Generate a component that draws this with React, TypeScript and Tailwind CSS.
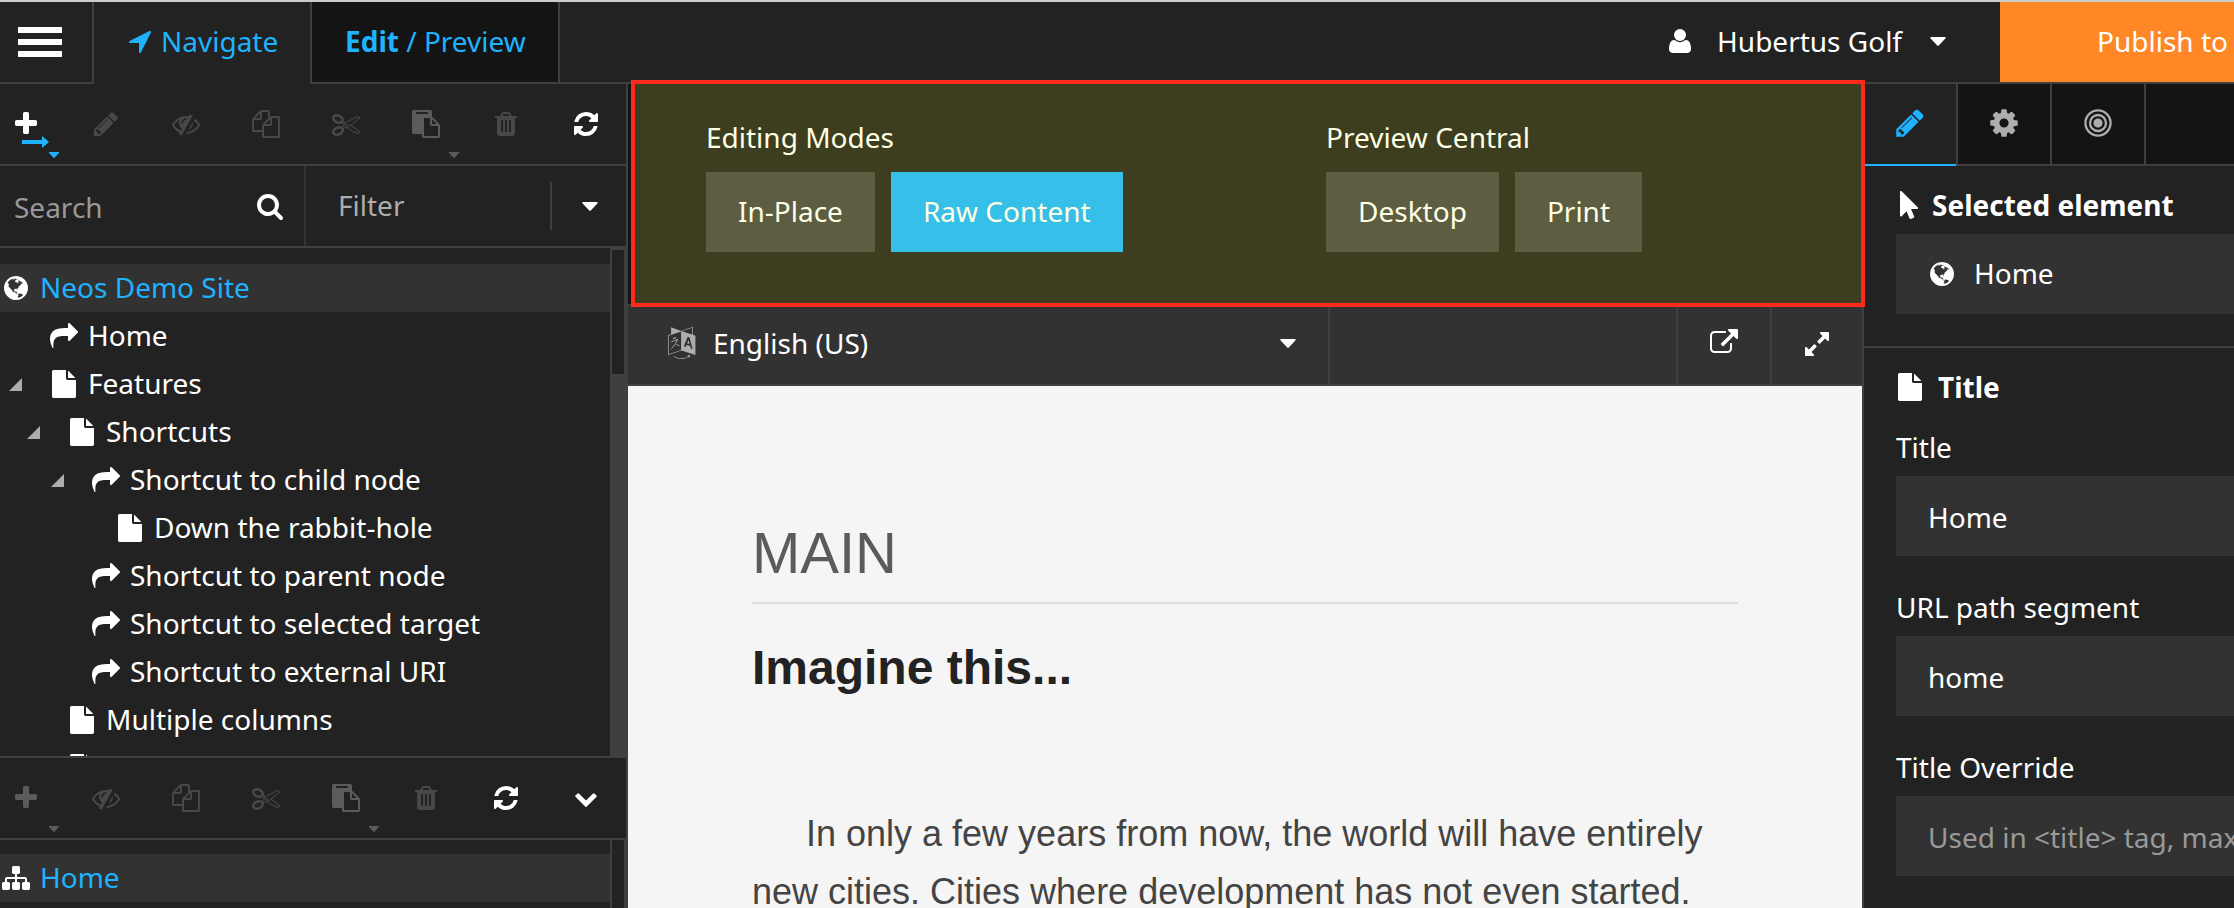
import type { ReactNode } from "react";

const paths = {
  plus: "M1600 736v192q0 40-28 68t-68 28h-416v416q0 40-28 68t-68 28h-192q-40 0-68-28t-28-68v-416h-416q-40 0-68-28t-28-68v-192q0-40 28-68t68-28h416v-416q0-40 28-68t68-28h192q40 0 68 28t28 68v416h416q40 0 68 28t28 68z",
  pencil: "M491 1536l91-91-235-235-91 91v107h128v128h107zm523-928q0-22-22-22-10 0-17 7l-542 542q-7 7-7 17 0 22 22 22 10 0 17-7l542-542q7-7 7-17zm-54-192l416 416-832 832h-416v-416zm683 96q0 53-37 90l-166 166-416-416 166-165q36-38 90-38 53 0 91 38l235 234q37 39 37 91z",
  refresh: "M1639 1056q0 5-1 7-64 268-268 434.5t-478 166.5q-146 0-282.5-55t-243.5-157l-129 129q-19 19-45 19t-45-19-19-45v-448q0-26 19-45t45-19h448q26 0 45 19t19 45-19 45l-137 137q71 66 161 102t187 36q134 0 250-65t186-179q11-17 53-117 8-23 30-23h192q13 0 22.5 9.5t9.5 22.5zm25-800v448q0 26-19 45t-45 19h-448q-26 0-45-19t-19-45 19-45l138-138q-148-137-349-137-134 0-250 65t-186 179q-11 17-53 117-8 23-30 23h-199q-13 0-22.5-9.5t-9.5-22.5v-7q65-268 270-434.5t480-166.5q146 0 284 55.5t245 156.5l130-129q19-19 45-19t45 19 19 45z",
  search: "M1216 832q0-185-131.5-316.5t-316.5-131.5-316.5 131.5-131.5 316.5 131.5 316.5 316.5 131.5 316.5-131.5 131.5-316.5zm512 832q0 52-38 90t-90 38q-54 0-90-38l-343-342q-179 124-399 124-143 0-273.5-55.5t-225-150-150-225-55.5-273.5 55.5-273.5 150-225 225-150 273.5-55.5 273.5 55.5 225 150 150 225 55.5 273.5q0 220-124 399l343 343q37 37 37 90z",
  eyeSlash: "M555 1335l78-141q-87-63-136-159t-49-203q0-121 61-225-229 117-381 353 167 258 427 375zm389-759q0-20-14-34t-34-14q-125 0-214.5 89.5t-89.5 214.5q0 20 14 34t34 14 34-14 14-34q0-86 61-147t147-61q20 0 34-14t14-34zm363-191q0 7-1 9-106 189-316 567t-315 566l-49 89q-10 16-28 16-12 0-134-70-16-10-16-28 0-12 44-87-143-65-263.5-173t-208.5-245q-20-31-20-69t20-69q153-235 380-371t496-136q89 0 180 17l54-97q10-16 28-16 5 0 18 6t31 15.5 33 18.5 31.5 18.5 19.5 11.5q16 10 16 27zm37 447q0 139-79 253.5t-209 164.5l280-502q8 45 8 84zm448 128q0 35-20 69-39 64-109 145-150 172-347.5 267t-419.5 95l74-132q212-18 392.5-137t301.5-307q-115-179-282-294l63-112q95 64 182.5 153t144.5 184q20 34 20 69z",
  copy: "M1696 384q40 0 68 28t28 68v1216q0 40-28 68t-68 28h-960q-40 0-68-28t-28-68v-288h-544q-40 0-68-28t-28-68v-672q0-40 20-88t48-76l408-408q28-28 76-48t88-20h416q40 0 68 28t28 68v328q68-40 128-40h416zm-544 213l-299 299h299v-299zm-640-384l-299 299h299v-299zm196 647l316-316v-416h-384v416q0 40-28 68t-68 28h-416v640h512v-256q0-40 20-88t48-76zm956 804v-1152h-384v416q0 40-28 68t-68 28h-416v640h896z",
  cut: "M960 896q26 0 45 19t19 45-19 45-45 19-45-19-19-45 19-45 45-19zm300 64l507 398q28 20 25 56-5 35-35 51l-128 64q-13 7-29 7-17 0-31-8l-690-387-110 66q-8 4-12 5 14 49 10 97-7 77-56 147.5t-132 123.5q-132 84-277 84-136 0-222-78-90-84-79-207 7-76 56-147t131-124q132-84 278-84 83 0 151 31 9-13 22-22l122-73-122-73q-13-9-22-22-68 31-151 31-146 0-278-84-82-53-131-124t-56-147q-5-59 15.5-113t63.5-93q85-79 222-79 145 0 277 84 83 52 132 123t56 148q4 48-10 97 4 1 12 5l110 66 690-387q14-8 31-8 16 0 29 7l128 64q30 16 35 51 3 36-25 56zm-681-260q46-42 21-108t-106-117q-92-59-192-59-74 0-113 36-46 42-21 108t106 117q92 59 192 59 74 0 113-36zm-85 745q81-51 106-117t-21-108q-39-36-113-36-100 0-192 59-81 51-106 117t21 108q39 36 113 36 100 0 192-59zm178-613l96 58v-11q0-36 33-56l14-8-79-44-26 26q-3 3-10 11t-12 12q-2 2-4 3.5t-3 2.5zm224 224l96 32 736-576-128-64-768 431v113l-160 96 9 8q2 2 7 6 4 4 11 12t11 12l26 26zm704 416l128-64-520-408-177 138q-2 3-13 7z",
  paste: "M768 1664h896v-640h-416q-40 0-68-28t-28-68v-416h-384v1152zm256-1440v-64q0-13-9.5-22.5t-22.5-9.5h-704q-13 0-22.5 9.5t-9.5 22.5v64q0 13 9.5 22.5t22.5 9.5h704q13 0 22.5-9.5t9.5-22.5zm256 672h299l-299-299v299zm512 128v672q0 40-28 68t-68 28h-960q-40 0-68-28t-28-68v-160h-544q-40 0-68-28t-28-68v-1344q0-40 28-68t68-28h1088q40 0 68 28t28 68v328q21 13 36 28l408 408q28 28 48 76t20 88z",
  trash: "M704 1376v-704q0-14-9-23t-23-9h-64q-14 0-23 9t-9 23v704q0 14 9 23t23 9h64q14 0 23-9t9-23zm256 0v-704q0-14-9-23t-23-9h-64q-14 0-23 9t-9 23v704q0 14 9 23t23 9h64q14 0 23-9t9-23zm256 0v-704q0-14-9-23t-23-9h-64q-14 0-23 9t-9 23v704q0 14 9 23t23 9h64q14 0 23-9t9-23zm-544-992h448l-48-117q-7-9-17-11h-317q-10 2-17 11zm928 32v64q0 14-9 23t-23 9h-96v948q0 83-47 143.5t-113 60.5h-832q-66 0-113-58.5t-47-141.5v-952h-96q-14 0-23-9t-9-23v-64q0-14 9-23t23-9h309l70-167q15-37 54-63t79-26h320q40 0 79 26t54 63l70 167h309q14 0 23 9t9 23z",
  globe: "M896 128q209 0 385.5 103t279.5 279.5 103 385.5-103 385.5-279.5 279.5-385.5 103-385.5-103-279.5-279.5-103-385.5 103-385.5 279.5-279.5 385.5-103zm274 521q-2 1-9.5 9.5t-13.5 9.5q2 0 4.5-5t5-11 3.5-7q6-7 22-15 14-6 52-12 34-8 51 11-2-2 9.5-13t14.5-12q3-2 15-4.5t15-7.5l2-22q-12 1-17.5-7t-6.5-21q0 2-6 8 0-7-4.5-8t-11.5 1-9 1q-10-3-15-7.5t-8-16.5-4-15q-2-5-9.5-11t-9.5-10q-1-2-2.5-5.5t-3-6.5-4-5.5-5.5-2.5-7 5-7.5 10-4.5 5q-3-2-6-1.5t-4.5 1-4.5 3-5 3.5q-3 2-8.5 3t-8.5 2q15-5-1-11-10-4-16-3 9-4 7.5-12t-8.5-14h5q-1-4-8.5-8.5t-17.5-8.5-13-6q-8-5-34-9.5t-33-.5q-5 6-4.5 10.5t4 14 3.5 12.5q1 6-5.5 13t-6.5 12q0 7 14 15.5t10 21.5q-3 8-16 16t-16 12q-5 8-1.5 18.5t10.5 16.5q2 2 1.5 4t-3.5 4.5-5.5 4-6.5 3.5l-3 2q-11 5-20.5-6t-13.5-26q-7-25-16-30-23-8-29 1-5-13-41-26-25-9-58-4 6-1 0-15-7-15-19-12 3-6 4-17.5t1-13.5q3-13 12-23 1-1 7-8.5t9.5-13.5.5-6q35 4 50-11 5-5 11.5-17t10.5-17q9-6 14-5.5t14.5 5.5 14.5 5q14 1 15.5-11t-7.5-20q12 1 3-17-4-7-8-9-12-4-27 5-8 4 2 8-1-1-9.5 10.5t-16.5 17.5-16-5q-1-1-5.5-13.5t-9.5-13.5q-8 0-16 15 3-8-11-15t-24-8q19-12-8-27-7-4-20.5-5t-19.5 4q-5 7-5.5 11.5t5 8 10.5 5.5 11.5 4 8.5 3q14 10 8 14-2 1-8.5 3.5t-11.5 4.5-6 4q-3 4 0 14t-2 14q-5-5-9-17.5t-7-16.5q7 9-25 6l-10-1q-4 0-16 2t-20.5 1-13.5-8q-4-8 0-20 1-4 4-2-4-3-11-9.5t-10-8.5q-46 15-94 41 6 1 12-1 5-2 13-6.5t10-5.5q34-14 42-7l5-5q14 16 20 25-7-4-30-1-20 6-22 12 7 12 5 18-4-3-11.5-10t-14.5-11-15-5q-16 0-22 1-146 80-235 222 7 7 12 8 4 1 5 9t2.5 11 11.5-3q9 8 3 19 1-1 44 27 19 17 21 21 3 11-10 18-1-2-9-9t-9-4q-3 5 .5 18.5t10.5 12.5q-7 0-9.5 16t-2.5 35.5-1 23.5l2 1q-3 12 5.5 34.5t21.5 19.5q-13 3 20 43 6 8 8 9 3 2 12 7.5t15 10 10 10.5q4 5 10 22.5t14 23.5q-2 6 9.5 20t10.5 23q-1 0-2.5 1t-2.5 1q3 7 15.5 14t15.5 13q1 3 2 10t3 11 8 2q2-20-24-62-15-25-17-29-3-5-5.5-15.5t-4.5-14.5q2 0 6 1.5t8.5 3.5 7.5 4 2 3q-3 7 2 17.5t12 18.5 17 19 12 13q6 6 14 19.5t0 13.5q9 0 20 10.5t17 19.5q5 8 8 26t5 24q2 7 8.5 13.5t12.5 9.5l16 8 13 7q5 2 18.5 10.5t21.5 11.5q10 4 16 4t14.5-2.5 13.5-3.5q15-2 29 15t21 21q36 19 55 11-2 1 .5 7.5t8 15.5 9 14.5 5.5 8.5q5 6 18 15t18 15q6-4 7-9-3 8 7 20t18 10q14-3 14-32-31 15-49-18 0-1-2.5-5.5t-4-8.5-2.5-8.5 0-7.5 5-3q9 0 10-3.5t-2-12.5-4-13q-1-8-11-20t-12-15q-5 9-16 8t-16-9q0 1-1.5 5.5t-1.5 6.5q-13 0-15-1 1-3 2.5-17.5t3.5-22.5q1-4 5.5-12t7.5-14.5 4-12.5-4.5-9.5-17.5-2.5q-19 1-26 20-1 3-3 10.5t-5 11.5-9 7q-7 3-24 2t-24-5q-13-8-22.5-29t-9.5-37q0-10 2.5-26.5t3-25-5.5-24.5q3-2 9-9.5t10-10.5q2-1 4.5-1.5t4.5 0 4-1.5 3-6q-1-1-4-3-3-3-4-3 7 3 28.5-1.5t27.5 1.5q15 11 22-2 0-1-2.5-9.5t-.5-13.5q5 27 29 9 3 3 15.5 5t17.5 5q3 2 7 5.5t5.5 4.5 5-.5 8.5-6.5q10 14 12 24 11 40 19 44 7 3 11 2t4.5-9.5 0-14-1.5-12.5l-1-8v-18l-1-8q-15-3-18.5-12t1.5-18.5 15-18.5q1-1 8-3.5t15.5-6.5 12.5-8q21-19 15-35 7 0 11-9-1 0-5-3t-7.5-5-4.5-2q9-5 2-16 5-3 7.5-11t7.5-10q9 12 21 2 8-8 1-16 5-7 20.5-10.5t18.5-9.5q7 2 8-2t1-12 3-12q4-5 15-9t13-5l17-11q3-4 0-4 18 2 31-11 10-11-6-20 3-6-3-9.5t-15-5.5q3-1 11.5-.5t10.5-1.5q15-10-7-16-17-5-43 12zm-163 877q206-36 351-189-3-3-12.5-4.5t-12.5-3.5q-18-7-24-8 1-7-2.5-13t-8-9-12.5-8-11-7q-2-2-7-6t-7-5.5-7.5-4.5-8.5-2-10 1l-3 1q-3 1-5.5 2.5t-5.5 3-4 3 0 2.5q-21-17-36-22-5-1-11-5.5t-10.5-7-10-1.5-11.5 7q-5 5-6 15t-2 13q-7-5 0-17.5t2-18.5q-3-6-10.5-4.5t-12 4.5-11.5 8.5-9 6.5-8.5 5.5-8.5 7.5q-3 4-6 12t-5 11q-2-4-11.5-6.5t-9.5-5.5q2 10 4 35t5 38q7 31-12 48-27 25-29 40-4 22 12 26 0 7-8 20.5t-7 21.5q0 6 2 16z",
  share: "M1792 640q0 26-19 45l-512 512q-19 19-45 19t-45-19-19-45v-256h-224q-98 0-175.5 6t-154 21.5-133 42.5-105.5 69.5-80 101-48.5 138.5-17.5 181q0 55 5 123 0 6 2.5 23.5t2.5 26.5q0 15-8.5 25t-23.5 10q-16 0-28-17-7-9-13-22t-13.5-30-10.5-24q-127-285-127-451 0-199 53-333 162-403 875-403h224v-256q0-26 19-45t45-19 45 19l512 512q19 19 19 45z",
  file: "M1152 512v-472q22 14 36 28l408 408q14 14 28 36h-472zm-128 32q0 40 28 68t68 28h544v1056q0 40-28 68t-68 28h-1344q-40 0-68-28t-28-68v-1600q0-40 28-68t68-28h800v544z",
  sitemap: "M1792 1248v320q0 40-28 68t-68 28h-320q-40 0-68-28t-28-68v-320q0-40 28-68t68-28h96v-192h-512v192h96q40 0 68 28t28 68v320q0 40-28 68t-68 28h-320q-40 0-68-28t-28-68v-320q0-40 28-68t68-28h96v-192h-512v192h96q40 0 68 28t28 68v320q0 40-28 68t-68 28h-320q-40 0-68-28t-28-68v-320q0-40 28-68t68-28h96v-192q0-52 38-90t90-38h512v-192h-96q-40 0-68-28t-28-68v-320q0-40 28-68t68-28h320q40 0 68 28t28 68v320q0 40-28 68t-68 28h-96v192h512q52 0 90 38t38 90v192h96q40 0 68 28t28 68z",
  user: "M1600 1405q0 120-73 189.5t-194 69.5h-874q-121 0-194-69.5t-73-189.5q0-53 3.5-103.5t14-109 26.5-108.5 43-97.5 62-81 85.5-53.5 111.5-20q9 0 42 21.5t74.5 48 108 48 133.5 21.5 133.5-21.5 108-48 74.5-48 42-21.5q61 0 111.5 20t85.5 53.5 62 81 43 97.5 26.5 108.5 14 109 3.5 103.5zm-320-893q0 159-112.5 271.5t-271.5 112.5-271.5-112.5-112.5-271.5 112.5-271.5 271.5-112.5 271.5 112.5 112.5 271.5z",
  locationArrow: "M1593 349l-640 1280q-17 35-57 35-5 0-15-2-22-5-35.5-22.5t-13.5-39.5v-576h-576q-22 0-39.5-13.5t-22.5-35.5 4-42 29-30l1280-640q13-7 29-7 27 0 45 19 15 14 18.5 34.5t-6.5 39.5z",
  externalLink: "M1408 928v320q0 119-84.5 203.5t-203.5 84.5h-832q-119 0-203.5-84.5t-84.5-203.5v-832q0-119 84.5-203.5t203.5-84.5h704q14 0 23 9t9 23v64q0 14-9 23t-23 9h-704q-66 0-113 47t-47 113v832q0 66 47 113t113 47h832q66 0 113-47t47-113v-320q0-14 9-23t23-9h64q14 0 23 9t9 23zm384-864v512q0 26-19 45t-45 19-45-19l-176-176-652 652q-10 10-23 10t-23-10l-114-114q-10-10-10-23t10-23l652-652-176-176q-19-19-19-45t19-45 45-19h512q26 0 45 19t19 45z",
  expand: "M883 1056q0 13-10 23l-332 332 144 144q19 19 19 45t-19 45-45 19h-448q-26 0-45-19t-19-45v-448q0-26 19-45t45-19 45 19l144 144 332-332q10-10 23-10t23 10l114 114q10 10 10 23zm781-864v448q0 26-19 45t-45 19-45-19l-144-144-332 332q-10 10-23 10t-23-10l-114-114q-10-10-10-23t10-23l332-332-144-144q-19-19-19-45t19-45 45-19h448q26 0 45 19t19 45z",
  cog: "M1152 896q0-106-75-181t-181-75-181 75-75 181 75 181 181 75 181-75 75-181zm512-109v222q0 12-8 23t-20 13l-185 28q-19 54-39 91 35 50 107 138 10 12 10 25t-9 23q-27 37-99 108t-94 71q-12 0-26-9l-138-108q-44 23-91 38-16 136-29 186-7 28-36 28h-222q-14 0-24.5-8.5t-11.5-21.5l-28-184q-49-16-90-37l-141 107q-10 9-25 9-14 0-25-11-126-114-165-168-7-10-7-23 0-12 8-23 15-21 51-66.5t54-70.5q-27-50-41-99l-183-27q-13-2-21-12.5t-8-23.5v-222q0-12 8-23t19-13l186-28q14-46 39-92-40-57-107-138-10-12-10-24 0-10 9-23 26-36 98.5-107.5t94.5-71.5q13 0 26 10l138 107q44-23 91-38 16-136 29-186 7-28 36-28h222q14 0 24.5 8.5t11.5 21.5l28 184q49 16 90 37l142-107q9-9 24-9 13 0 25 10 129 119 165 170 7 8 7 22 0 12-8 23-15 21-51 66.5t-54 70.5q26 50 41 98l183 28q13 2 21 12.5t8 23.5z",
  pointer: "M1389 1043q31 30 14 69-17 40-59 40h-382l201 476q10 25 0 49t-34 35l-177 75q-25 10-49 0t-35-34l-191-452-312 312q-19 19-45 19-12 0-24-5-40-17-40-59v-1504q0-42 40-59 12-5 24-5 27 0 45 19z",
  language: "M654 1078q-1 3-12.5-.5t-31.5-11.5l-20-9q-44-20-87-49-7-5-41-31.5t-38-28.5q-67 103-134 181-81 95-105 110-4 2-19.5 4t-18.5 0q6-4 82-92 21-24 85.5-115t78.5-118q17-30 51-98.5t36-77.5q-8-1-110 33-8 2-27.5 7.5t-34.5 9.5-17 5q-2 2-2 10.5t-1 9.5q-5 10-31 15-23 7-47 0-18-4-28-21-4-6-5-23 6-2 24.5-5t29.5-6q58-16 105-32 100-35 102-35 10-2 43-19.5t44-21.5q9-3 21.5-8t14.5-5.5 6 .5q2 12-1 33 0 2-12.5 27t-26.5 53.5-17 33.5q-25 50-77 131l64 28q12 6 74.5 32t67.5 28q4 1 10.5 25.5t4.5 30.5zm-205-486q3 15-4 28-12 23-50 38-30 12-60 12-26-3-49-26-14-15-18-41l1-3q3 3 19.5 5t26.5 0 58-16q36-12 55-14 17 0 21 17zm698 129l63 227-139-42zm-1108 800l694-232v-1032l-694 233v1031zm1241-317l102 31-181-657-100-31-216 536 102 31 45-110 211 65zm-503-962l573 184v-380zm311 1323l158 13-54 160-40-66q-130 83-276 108-58 12-91 12h-84q-79 0-199.5-39t-183.5-85q-8-7-8-16 0-8 5-13.5t13-5.5q4 0 18 7.5t30.5 16.5 20.5 11q73 37 159.5 61.5t157.5 24.5q95 0 167-14.5t157-50.5q15-7 30.5-15.5t34-19 28.5-16.5zm448-1079v1079l-774-246q-14 6-375 127.5t-368 121.5q-13 0-18-13 0-1-1-3v-1078q3-9 4-10 5-6 20-11 107-36 149-50v-384l558 198q2 0 160.5-55t316-108.5 161.5-53.5q20 0 20 21v418z",
  bullseye: "M896 640a256 256 0 1 0 0 512 256 256 0 0 0 0-512zM896 384a512 512 0 1 0 0 1024 512 512 0 0 0 0-1024zm0 128a384 384 0 1 1 0 768 384 384 0 0 1 0-768zM896 128a768 768 0 1 0 0 1536 768 768 0 0 0 0-1536zm0 128a640 640 0 1 1 0 1280 640 640 0 0 1 0-1280z",
  chevronDown: "M1683 808l-742 741q-19 19-45 19t-45-19l-742-741q-19-19-19-45.5t19-45.5l166-165q19-19 45-19t45 19l531 531 531-531q19-19 45-19t45 19l166 165q19 19 19 45.5t-19 45.5z",
};

type IconName = keyof typeof paths;

function Icon({ name, className = "size-7" }: { name: IconName; className?: string }) {
  return (
    <svg viewBox="0 0 1792 1792" className={`shrink-0 overflow-visible ${className}`} fill="currentColor" aria-hidden="true">
      <path d={paths[name]} />
    </svg>
  );
}

function Caret({ className }: { className: string }) {
  return (
    <svg viewBox="0 0 16 9" className={`shrink-0 ${className}`} fill="currentColor" aria-hidden="true">
      <path d="M1 0h14q1.400.6.4 1.600L8.700 8.600q-.7.6-1.400 0L.6 1.600Q-.4.600 1 0z" />
    </svg>
  );
}

function ToolButton({
  label,
  icon,
  tone = "text-[#484848]",
  caret,
  iconClass,
  children,
}: {
  label: string;
  icon: IconName;
  tone?: string;
  caret?: string;
  iconClass?: string;
  children?: ReactNode;
}) {
  return (
    <button type="button" aria-label={label} className={`relative flex h-20 w-20 shrink-0 items-center justify-center ${tone}`}>
      <Icon name={icon} className={iconClass} />
      {children}
      {caret && <Caret className={`absolute right-1.5 bottom-1.5 h-1.5 w-3 ${caret}`} />}
    </button>
  );
}

type Node = { label: string; icon: IconName; indent: string; open?: boolean; active?: boolean };

const documents: Node[] = [
  { label: "Neos Demo Site", icon: "globe", indent: "pl-0.5", active: true },
  { label: "Home", icon: "share", indent: "pl-[50px]" },
  { label: "Features", icon: "file", indent: "pl-[9px]", open: true },
  { label: "Shortcuts", icon: "file", indent: "pl-[27px]", open: true },
  { label: "Shortcut to child node", icon: "share", indent: "pl-[51px]", open: true },
  { label: "Down the rabbit-hole", icon: "file", indent: "pl-[116px]" },
  { label: "Shortcut to parent node", icon: "share", indent: "pl-[92px]" },
  { label: "Shortcut to selected target", icon: "share", indent: "pl-[92px]" },
  { label: "Shortcut to external URI", icon: "share", indent: "pl-[92px]" },
  { label: "Multiple columns", icon: "file", indent: "pl-[68px]" },
  { label: "Navigation elements", icon: "file", indent: "pl-[68px]" },
];

const content: Node[] = [{ label: "Home", icon: "sitemap", indent: "pl-0.5", active: true }];

function Tree({ nodes }: { nodes: Node[] }) {
  return (
    <ul>
      {nodes.map((node) => (
        <li key={node.label} className={`flex h-12 items-center ${node.indent} ${node.active ? "bg-[#323232]" : ""}`}>
          {node.open && (
            <svg viewBox="0 0 13 13" className="mr-7 size-[13px] shrink-0" fill="#adadad" aria-hidden="true">
              <path d="M13 0v13H0z" />
            </svg>
          )}
          <Icon name={node.icon} />
          <a href="#" className={`ml-2.5 pb-0.5 leading-10 whitespace-nowrap ${node.active ? "text-[#1fb3ff]" : ""}`}>
            {node.label}
          </a>
        </li>
      ))}
    </ul>
  );
}

function Field({ id, label, value, placeholder }: { id: string; label: string; value?: string; placeholder?: string }) {
  return (
    <div className="pb-8">
      <label htmlFor={id} className="block pb-2.5 leading-[38px]">
        {label}
      </label>
      <input
        id={id}
        type="text"
        defaultValue={value}
        placeholder={placeholder}
        className="block h-20 w-full bg-[#323232] pt-0.5 pl-8 text-white outline-none placeholder:text-[#999999]"
      />
    </div>
  );
}

function ModeGroup({ title, modes, active }: { title: string; modes: string[]; active?: string }) {
  return (
    <div>
      <h2 className="pb-3.5 leading-[42px]">{title}</h2>
      <div className="flex gap-4">
        {modes.map((mode) => (
          <button key={mode} type="button" className={`h-20 px-8 pb-0.5 leading-10 ${mode === active ? "bg-[#35bfe9]" : "bg-[#5d5d42]"}`}>
            {mode}
          </button>
        ))}
      </div>
    </div>
  );
}

export default function App() {
  return (
    <div className="flex h-screen flex-col overflow-hidden border-t-2 border-[#c9cdcd] bg-[#222222] font-['Noto_Sans',sans-serif] text-[28px] text-white">
      <header className="flex h-[82px] shrink-0">
        <div className="flex w-[94px] items-center border-r-2 border-b-2 border-[#3f3f3f] pl-[18px]">
          <button type="button" aria-label="Menu" className="flex w-11 flex-col gap-1.5">
            <span className="h-1.5 bg-white" />
            <span className="h-1.5 bg-white" />
            <span className="h-1.5 bg-white" />
          </button>
        </div>
        <a href="#" className="flex w-[216px] items-center gap-[7px] pb-1 pl-8 text-[#1fb3ff]">
          <Icon name="locationArrow" />
          Navigate
        </a>
        <a href="#" className="flex w-[250px] items-center border-x-2 border-b-2 border-[#3f3f3f] bg-[#141414] pb-0.5 pl-[33px] whitespace-pre text-[#1fb3ff]">
          <b>Edit</b> / Preview
        </a>
        <div className="flex flex-1 border-b-2 border-[#3f3f3f]">
          <button type="button" className="ml-auto flex items-center pr-[54px] pb-0.5">
            <Icon name="user" />
            <span className="ml-[23px]">Hubertus Golf</span>
            <Caret className="ml-7 h-[9px] w-4" />
          </button>
          <button type="button" className="w-[234px] bg-[#ff8726] pr-1.5 pb-0.5 text-right whitespace-nowrap">
            Publish to
          </button>
        </div>
      </header>

      <div className="flex min-h-0 flex-1">
        <aside className="flex w-[628px] shrink-0 flex-col overflow-hidden border-r-2 border-[#3f3f3f]">
          <div className="flex shrink-0 justify-end border-b-2 border-[#3f3f3f]">
            <ToolButton label="New" icon="plus" tone="text-white" caret="text-[#1fb3ff]">
              <svg viewBox="0 0 27 12" className="absolute right-[17px] bottom-4 h-3 w-[27px] fill-[#1fb3ff]" aria-hidden="true">
                <path d="M0 4h20V0l7 6-7 6V8H0z" />
              </svg>
            </ToolButton>
            <ToolButton label="Edit" icon="pencil" />
            <ToolButton label="Hide" icon="eyeSlash" />
            <ToolButton label="Copy" icon="copy" />
            <ToolButton label="Cut" icon="cut" />
            <ToolButton label="Paste" icon="paste" tone="text-[#5b5b5b]" caret="text-[#5b5b5b]" />
            <ToolButton label="Delete" icon="trash" />
            <ToolButton label="Refresh" icon="refresh" tone="text-white" />
          </div>
          <div className="flex h-[82px] shrink-0 border-b-2 border-[#3f3f3f]">
            <div className="flex w-[306px] items-center border-r-2 border-[#323232] pr-5">
              <input type="text" aria-label="Search" placeholder="Search" className="min-w-0 flex-1 bg-transparent pt-0.5 pl-3.5 outline-none placeholder:text-[#999999]" />
              <Icon name="search" />
            </div>
            <button type="button" className="flex flex-1 items-center pr-7 pl-8 text-[#adadad]">
              <span className="pb-0.5">Filter</span>
              <span className="mr-[30px] ml-auto h-12 w-0.5 bg-[#3f3f3f]" />
              <Caret className="h-[9px] w-4 text-white" />
            </button>
          </div>
          <div className="flex min-h-0 flex-1">
            <div className="min-w-0 flex-1 overflow-hidden pt-4">
              <Tree nodes={documents} />
            </div>
            <div className="w-4 bg-[#3f3f3f] px-0.5 pt-0.5">
              <div className="h-[124px] bg-[#222222]" />
            </div>
          </div>
          <div className="flex shrink-0 justify-end border-y-2 border-[#3f3f3f]">
            <ToolButton label="New content" icon="plus" tone="text-[#5b5b5b]" caret="text-[#5b5b5b]" />
            <ToolButton label="Hide content" icon="eyeSlash" />
            <ToolButton label="Copy content" icon="copy" />
            <ToolButton label="Cut content" icon="cut" />
            <ToolButton label="Paste content" icon="paste" tone="text-[#5b5b5b]" caret="text-[#5b5b5b]" />
            <ToolButton label="Delete content" icon="trash" />
            <ToolButton label="Refresh content" icon="refresh" tone="text-white" />
            <ToolButton label="Collapse" icon="chevronDown" tone="text-white" iconClass="size-6" />
          </div>
          <div className="flex h-[68px] shrink-0">
            <div className="min-w-0 flex-1 pt-3.5">
              <Tree nodes={content} />
            </div>
            <div className="w-4 bg-[#3f3f3f] px-0.5">
              <div className="h-full bg-[#222222]" />
            </div>
          </div>
        </aside>

        <main className="flex min-w-0 flex-1 flex-col">
          <section className="relative shrink-0 border-b-2 border-[#3f3f3f] bg-[#141414]">
            <div className="absolute -top-1 -right-[3px] -bottom-[3px] left-[3px] border-4 border-[#ff2a1c] bg-[#3d3d20]" />
            <div className="relative grid grid-cols-2 pt-8 pb-[52px] pl-[78px] text-[#ffffe6]">
              <ModeGroup title="Editing Modes" modes={["In-Place", "Raw Content"]} active="Raw Content" />
              <div className="pl-[42px]">
                <ModeGroup title="Preview Central" modes={["Desktop", "Print"]} />
              </div>
            </div>
          </section>
          <div className="flex h-20 shrink-0 border-b-2 border-[#3f3f3f] bg-[#323232]">
            <button type="button" className="flex w-[702px] items-center border-r-2 border-[#3f3f3f] pr-8 pb-1 pl-10">
              <Icon name="language" className="size-8 text-[#adadad]" />
              <span className="ml-[13px]">English (US)</span>
              <Caret className="ml-auto h-[9px] w-4" />
            </button>
            <button type="button" aria-label="Open in new window" className="ml-auto flex w-[94px] items-center justify-center border-l-2 border-[#3f3f3f] pb-1">
              <Icon name="externalLink" />
            </button>
            <button type="button" aria-label="Full screen" className="flex w-[92px] items-center justify-center border-l-2 border-[#3f3f3f] pb-0.5">
              <Icon name="expand" />
            </button>
          </div>
          <article className="min-h-0 flex-1 overflow-hidden bg-[#f5f5f5] px-[124px] pt-[134px] font-['Liberation_Sans',sans-serif]">
            <h1 className="border-b-2 border-[#dddddd] pb-4 text-[58px] leading-[66px] text-[#5b5b5b]">MAIN</h1>
            <h2 className="pt-9 text-[48px] leading-[56px] font-bold text-[#222222]">Imagine this...</h2>
            <p className="pt-[109px] indent-[54px] text-[36px] leading-[58px] text-[#444444]">
              In only a few years from now, the world will have entirely new cities. Cities where development has not even started.
            </p>
          </article>
        </main>

        <aside className="w-[372px] shrink-0 overflow-hidden border-l-2 border-[#3f3f3f]">
          <div role="tablist" className="flex h-[82px] bg-[#141414]">
            <button type="button" role="tab" aria-selected="true" aria-label="Properties" className="flex w-[92px] items-center justify-center border-b-2 border-[#1fb3ff] bg-[#222222] pb-0.5 text-[#1fb3ff]">
              <Icon name="pencil" className="size-8" />
            </button>
            <button type="button" role="tab" aria-label="Settings" className="flex w-[94px] items-center justify-center border-b-2 border-l-2 border-[#3f3f3f] pb-0.5 text-[#adadad]">
              <Icon name="cog" className="size-8" />
            </button>
            <button type="button" role="tab" aria-label="Targeting" className="flex w-[94px] items-center justify-center border-b-2 border-l-2 border-[#3f3f3f] pb-0.5 text-[#adadad]">
              <Icon name="bullseye" className="size-8" />
            </button>
            <div className="flex-1 border-b-2 border-l-2 border-[#3f3f3f]" />
          </div>
          <section className="border-b-2 border-[#3f3f3f] pt-5 pb-8 pl-8">
            <h2 className="flex items-center gap-2 pb-2.5 leading-[38px] font-bold">
              <Icon name="pointer" />
              Selected element
            </h2>
            <div className="flex h-20 items-center gap-[18px] bg-[#323232] pl-8">
              <Icon name="globe" />
              <span className="pb-0.5 leading-10">Home</span>
            </div>
          </section>
          <section className="pt-5 pl-8">
            <h2 className="flex items-center gap-3.5 pb-[22px] leading-[38px] font-bold">
              <Icon name="file" />
              Title
            </h2>
            <Field id="title" label="Title" value="Home" />
            <Field id="segment" label="URL path segment" value="home" />
            <Field id="override" label="Title Override" placeholder="Used in <title> tag, max" />
          </section>
        </aside>
      </div>
    </div>
  );
}
